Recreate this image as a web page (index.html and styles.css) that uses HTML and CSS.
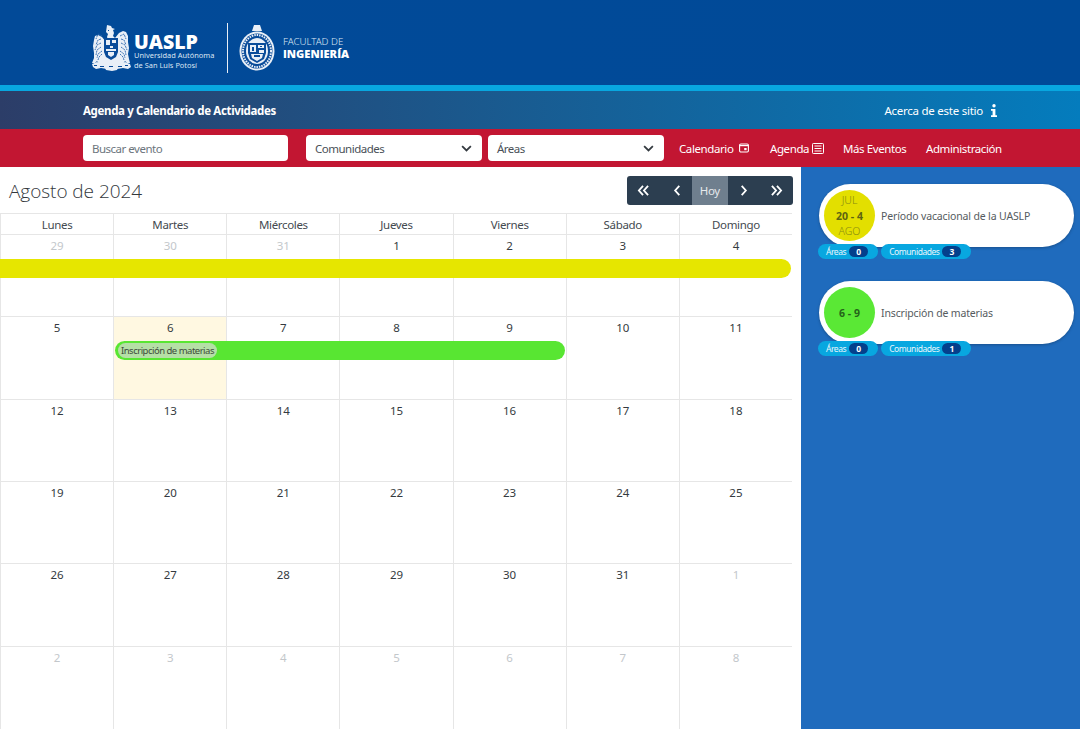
FILE: index.html
```html
<!DOCTYPE html>
<html lang="es">
<head>
<meta charset="utf-8">
<title>Agenda y Calendario de Actividades</title>
<link rel="stylesheet" href="styles.css">
</head>
<body>
<header class="brand">
  <div class="logo-uaslp">
    <svg class="crest" viewBox="0 0 40 46" width="40" height="46" aria-hidden="true">
      <path fill="#e9eff7" d="M16 0l4 1 1 2 3 1-2 1 1 3-1 3 2 2 4-5 4-2 3 1 2 4 0 6 1 6-1 6 1 5 1 4-3 0-2-2-2 3-5 0-3 3 3 1-1 2-5 1-6-1-1-2 3-1-3-3-6 0-2-3-2 2-3 0 2-5 0-5-1-7 1-6 1-4 3-1 4 2 4 5 2-2-1-3 1-3-2-2z"/>
      <path fill="#e9eff7" d="M1 39l5-2 5 2 4-1h10l4 1 5-2 5 2 1 3-3 2-5-1-6 1-5-1-5 1-6-1-5 1-3-2z"/>
      <path fill="none" stroke="#2a66ad" stroke-width=".9" stroke-dasharray="2 .8" d="M11 11l-4-2-2 5M10 14l-3 1-2 5M10 18l-4 2-2 5M10 22l-4 3-1 5M11 26l-4 3-1 4M11 29l-3 3-1 3M29 11l4-2 2 5M30 14l3 1 2 5M30 18l4 2 2 5M30 22l4 3 1 5M29 26l4 3 1 4M29 29l3 3 1 3"/>
      <path fill="#0a4c9a" d="M13 13h14v14l-2 5-5 3-5-3-2-5z"/>
      <path fill="#e9eff7" d="M15 15h4v5h-4zM21 15h4v3h-4zM19 21h3v2h-3zM15 24h10v2H15zM17 27h6v3l-3 2-3-2z"/>
      <path fill="#0a4c9a" d="M17 5h1v1h-1zM3 40h3v1H3zM9 41h4v1H9zM18 41h4v1h-4zM27 41h4v1h-4zM34 40h3v1h-3z"/>
    </svg>
    <div class="logo-text">
      <span class="logo-name">UASLP</span>
      <span class="logo-sub">Universidad Autónoma<br>de San Luis Potosí</span>
    </div>
  </div>
  <div class="logo-rule"></div>
  <div class="logo-fi">
    <svg class="seal" viewBox="0 0 36 46" width="36" height="46" aria-hidden="true">
      <path fill="#e9eff7" d="M15 0h6l1 3 1 3h-10l1-3z"/>
      <ellipse cx="18" cy="26" rx="17.500" ry="19.500" fill="#e9eff7"/>
      <ellipse cx="18" cy="26" rx="15.500" ry="17.500" fill="#0a4c9a"/>
      <ellipse cx="18" cy="26" rx="14" ry="16" fill="none" stroke="#e9eff7" stroke-width="2" stroke-dasharray="1.500 1"/>
      <ellipse cx="18" cy="26" rx="11" ry="13" fill="#e9eff7"/>
      <path fill="#0a4c9a" d="M9 18h18v10l-2 6-7 4-7-4-2-6z"/>
      <path fill="#e9eff7" d="M11 20h6v7h-6zM19 20h6v3h-6zM20 25h5v3h-5zM12 29h12l-1 4-5 3-5-3z"/>
      <path fill="#0a4c9a" d="M13 22h2v4h-2zM21 21h2v1h-2zM15 30h6v2h-6z"/>
    </svg>
    <div class="fi-text">
      <span class="fi-top">FACULTAD DE</span>
      <span class="fi-bot">INGENIERÍA</span>
    </div>
  </div>
</header>
<div class="stripe"></div>
<div class="title-bar">
  <strong class="site-title">Agenda y Calendario de Actividades</strong>
  <a class="about">Acerca de este sitio
    <svg class="info" viewBox="0 0 6 13" width="6" height="13" aria-hidden="true"><circle cx="3" cy="1.700" r="1.700" fill="#fff"/><path fill="#fff" d="M0 5h4.400v6.200H6V13H0v-1.800h1.600V6.800H0z"/></svg>
  </a>
</div>
<nav class="toolbar">
  <input class="search" type="text" placeholder="Buscar evento">
  <div class="select sel-com">Comunidades
    <svg viewBox="0 0 12 8" width="11" height="7" aria-hidden="true"><path d="M1 1.200l5 5 5-5" fill="none" stroke="#343a40" stroke-width="2"/></svg>
  </div>
  <div class="select sel-are">Áreas
    <svg viewBox="0 0 12 8" width="11" height="7" aria-hidden="true"><path d="M1 1.200l5 5 5-5" fill="none" stroke="#343a40" stroke-width="2"/></svg>
  </div>
  <a class="nav-link nl-cal">Calendario
    <svg viewBox="0 0 10 10" width="10" height="10" aria-hidden="true"><rect x=".6" y="1" width="8.800" height="8" rx="1.200" fill="none" stroke="#fff" stroke-width="1.100"/><path d="M.6 2.600h8.800" stroke="#fff" stroke-width="1.200"/><rect x="5.200" y="5" width="2.400" height="2.200" fill="#fff"/></svg>
  </a>
  <a class="nav-link nl-age">Agenda
    <svg viewBox="0 0 12 11" width="12" height="11" aria-hidden="true"><rect x=".5" y=".5" width="11" height="10" rx=".8" fill="none" stroke="#fff" stroke-width="1"/><path d="M2.500 3h7M2.500 5.500h7M2.500 8h7" stroke="#fff" stroke-width="1"/></svg>
  </a>
  <a class="nav-link nl-mas">Más Eventos</a>
  <a class="nav-link nl-adm">Administración</a>
</nav>
<main class="content">
  <section class="cal">
    <div class="cal-head">
      <h1 class="month">Agosto de 2024</h1>
      <div class="pager">
        <button class="pg"><svg viewBox="0 0 14 12" width="13" height="11" aria-hidden="true"><path d="M6.500 1L2 6l4.500 5M12 1L7.500 6l4.500 5" fill="none" stroke="#fff" stroke-width="2"/></svg></button>
        <button class="pg"><svg viewBox="0 0 8 12" width="8" height="11" aria-hidden="true"><path d="M6.500 1L2 6l4.500 5" fill="none" stroke="#fff" stroke-width="2"/></svg></button>
        <button class="pg pg-today">Hoy</button>
        <button class="pg"><svg viewBox="0 0 8 12" width="8" height="11" aria-hidden="true"><path d="M1.500 1L6 6l-4.500 5" fill="none" stroke="#fff" stroke-width="2"/></svg></button>
        <button class="pg"><svg viewBox="0 0 14 12" width="13" height="11" aria-hidden="true"><path d="M2 1l4.500 5L2 11M7.500 1L12 6l-4.500 5" fill="none" stroke="#fff" stroke-width="2"/></svg></button>
      </div>
    </div>
    <div class="grid">
      <div class="dow">Lunes</div><div class="dow">Martes</div><div class="dow">Miércoles</div><div class="dow">Jueves</div><div class="dow">Viernes</div><div class="dow">Sábado</div><div class="dow">Domingo</div>

      <div class="day off">29</div><div class="day off">30</div><div class="day off">31</div><div class="day">1</div><div class="day">2</div><div class="day">3</div><div class="day">4</div>
      <div class="day">5</div><div class="day today">6</div><div class="day">7</div><div class="day">8</div><div class="day">9</div><div class="day">10</div><div class="day">11</div>
      <div class="day">12</div><div class="day">13</div><div class="day">14</div><div class="day">15</div><div class="day">16</div><div class="day">17</div><div class="day">18</div>
      <div class="day">19</div><div class="day">20</div><div class="day">21</div><div class="day">22</div><div class="day">23</div><div class="day">24</div><div class="day">25</div>
      <div class="day">26</div><div class="day">27</div><div class="day">28</div><div class="day">29</div><div class="day">30</div><div class="day">31</div><div class="day off">1</div>
      <div class="day off">2</div><div class="day off">3</div><div class="day off">4</div><div class="day off">5</div><div class="day off">6</div><div class="day off">7</div><div class="day off">8</div>

      <div class="bar bar-yellow"></div>
      <div class="bar bar-green"><span class="bar-label">Inscripción de materias</span></div>
    </div>
  </section>
  <aside class="side">
    <article class="event">
      <div class="pill">
        <div class="date date-y"><span class="dm">JUL</span><b>20 - 4</b><span class="dm">AGO</span></div>
        <span class="ev-title">Período vacacional de la UASLP</span>
      </div>
      <div class="tags">
        <span class="tag">Áreas <i class="num">0</i></span>
        <span class="tag">Comunidades <i class="num">3</i></span>
      </div>
    </article>
    <article class="event">
      <div class="pill">
        <div class="date date-g"><b>6 - 9</b></div>
        <span class="ev-title">Inscripción de materias</span>
      </div>
      <div class="tags">
        <span class="tag">Áreas <i class="num">0</i></span>
        <span class="tag">Comunidades <i class="num">1</i></span>
      </div>
    </article>
  </aside>
</main>
</body>
</html>
```
FILE: styles.css
```css
* { box-sizing: border-box; }
html, body { margin: 0; height: 729px; overflow: hidden; }
body { font-family: "Noto Sans", "Open Sans", sans-serif; font-size: 12px; color: #212529; background: #fff; }

.brand { height: 85px; background: linear-gradient(90deg, #024a98, #004a98); display: flex; align-items: center; padding: 11px 0 0 91px; color: #fff; }
.logo-uaslp { display: flex; align-items: center; width: 136px; }
.crest { margin-right: 3px; flex: none; }
.logo-text { display: flex; flex-direction: column; padding-top: 8px; }
.logo-name { font-family: "Open Sans", sans-serif; font-weight: 800; font-size: 19.500px; line-height: 16px; }
.logo-sub { font-size: 7.400px; line-height: 10px; color: #dce6f3; white-space: nowrap; letter-spacing: .02px; }
.logo-rule { width: 1px; height: 50px; background: #e8eef6; margin-right: 11px; }
.logo-fi { display: flex; align-items: center; gap: 8px; }
.fi-text { display: flex; flex-direction: column; }
.fi-top { font-size: 9.700px; line-height: 12px; color: #dce6f3; font-weight: 300; }
.fi-bot { font-family: "Open Sans", sans-serif; font-size: 11.100px; line-height: 12px; font-weight: 800; }

.stripe { height: 6px; background: #08a7e0; }

.title-bar { height: 38px; background: linear-gradient(90deg, #2c3d68, #047cbd); display: flex; align-items: center; justify-content: space-between; padding: 0 83px 0 83px; color: #fff; }
.site-title { font-size: 11.500px; font-weight: 700; letter-spacing: -.35px; }
.about { display: flex; align-items: center; gap: 8px; font-size: 11.500px; letter-spacing: -.25px; }

.toolbar { height: 38px; background: #c21632; display: flex; align-items: center; padding-left: 83px; color: #fff; }
.search { width: 205px; height: 26px; border: 0; border-radius: 4px; padding: 0 9px; font: 11.500px "Noto Sans", sans-serif; letter-spacing: -.5px; background: #fff; margin-right: 18px; }
.search::placeholder { color: #6c757d; opacity: 1; }
.select { height: 26px; background: #fff; border-radius: 4px; color: #495057; display: flex; align-items: center; justify-content: space-between; padding: 0 10px 0 9px; font-size: 11.500px; letter-spacing: -.5px; }
.sel-com { width: 176px; margin-right: 6px; }
.sel-are { width: 176px; margin-right: 15px; }
.nav-link { display: flex; align-items: center; font-size: 11.500px; letter-spacing: -.4px; white-space: nowrap; }
.nl-cal { gap: 6px; width: 91px; }
.nl-age { gap: 3px; width: 73px; }
.nl-mas { width: 83px; }

.content { display: flex; height: 562px; }
.cal { width: 801px; background: #fff; }
.cal-head { height: 46px; display: flex; align-items: flex-start; justify-content: space-between; padding-right: 8px; }
.month { margin: 12px 0 0 9px; font-family: "Open Sans", sans-serif; font-size: 19px; line-height: 25px; font-weight: 300; color: #33383d; letter-spacing: -.05px; }
.pager { display: flex; margin-top: 9px; border-radius: 3px; overflow: hidden; height: 29px; }
.pg { width: 32.600px; height: 29px; border: 0; padding: 0; background: #2c3e50; color: #fff; display: flex; align-items: center; justify-content: center; font: 11.500px "Noto Sans", sans-serif; letter-spacing: -.3px; }
.pg:nth-child(-n+2) { padding-left: 2px; }
.pg-today { width: 36px; background: #6f7f8e; color: #e6e9ec; }

.grid { position: relative; display: grid; width: 792px; grid-template-columns: repeat(7, 113.143px); grid-template-rows: 21px 82px 83px 82px 82px 83px 83px; border-top: 1px solid #e6e6e6; height: 516px; }
.dow { text-align: center; font-size: 11.500px; letter-spacing: -.33px; line-height: 21px; border-left: 1px solid #e6e6e6; border-bottom: 1px solid #e6e6e6; color: #444a50; }
.day { text-align: center; font-size: 11.500px; line-height: 16px; padding-top: 3px; border-left: 1px solid #e6e6e6; border-bottom: 1px solid #e6e6e6; color: #343a40; }
.off { color: #c3c7cb; }
.today { background: #fff8e1; }

.bar { position: absolute; height: 19px; border-radius: 0 10px 10px 0; }
.bar-yellow { left: 0; top: 45px; width: 791px; background: #e6e600; }
.bar-green { left: 115px; top: 127px; width: 450px; background: #58e632; border-radius: 10px; padding: 2px 3px; display: flex; }
.bar-label { font-size: 9.500px; letter-spacing: -.5px; line-height: 15px; height: 15px; padding: 0 3px; border-radius: 8px; background: #b5dfa6; color: #3c4a3a; white-space: nowrap; }

.side { width: 279px; background: #1f6bbd; padding: 17px 6px 0 18px; }
.event { height: 97px; }
.pill { height: 63px; background: #fff; border-radius: 32px; box-shadow: 0 1px 3px rgba(0,0,0,.25); display: flex; align-items: center; padding-left: 5px; gap: 6px; }
.date { width: 51px; height: 51px; padding-top: 2px; border-radius: 50%; display: flex; flex-direction: column; align-items: center; justify-content: center; font-size: 10.500px; line-height: 15.500px; flex: none; }
.date b { font-weight: 700; }
.date-y { background: #e3df00; color: #5d6412; }
.date-y .dm { color: #8a8c10; font-weight: 300; }
.date-g { background: #5ae835; color: #25641a; }
.ev-title { font-size: 10.500px; letter-spacing: -.15px; color: #555b60; white-space: nowrap; }
.tags { display: flex; gap: 3.500px; margin: -3px 0 0 -1px; position: relative; }
.tag { height: 15px; border-radius: 8px; background: #08a7e0; color: #e8f6fc; font-size: 8.500px; letter-spacing: -.45px; line-height: 15px; padding: 0 9.500px 0 8px; display: inline-flex; align-items: center; gap: 3px; white-space: nowrap; }
.num { font-style: normal; font-weight: 700; font-size: 8.500px; letter-spacing: 0; color: #fff; background: #04408c; border-radius: 7px; width: 19px; height: 11px; line-height: 11px; text-align: center; }
```
